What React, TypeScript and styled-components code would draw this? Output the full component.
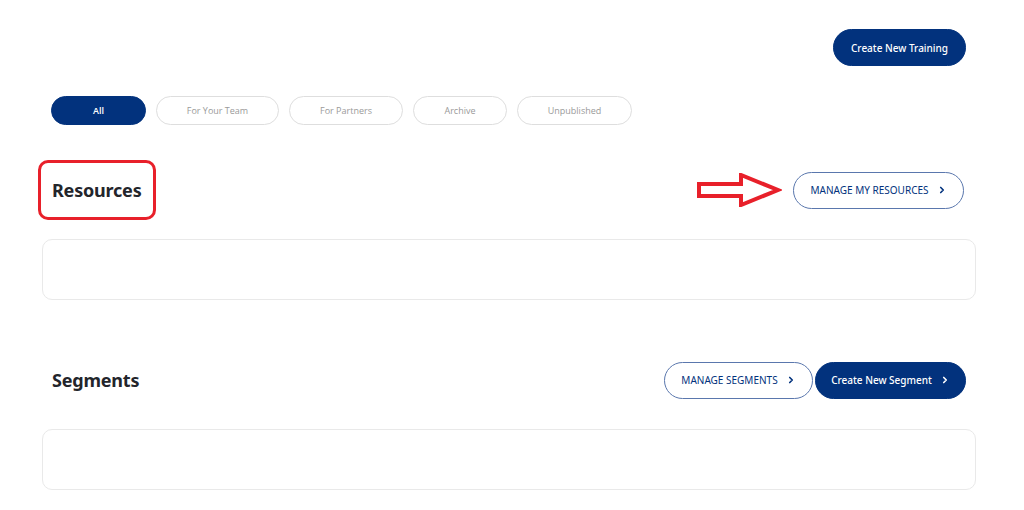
import React from 'react';
import styled, { createGlobalStyle } from 'styled-components';
import { ChevronRight } from 'lucide-react';

const NAVY = '#02327d';
const RED = '#e8202a';

const GlobalStyle = createGlobalStyle`
  html, body {
    margin: 0;
    padding: 0;
    background: #ffffff;
  }
  body {
    font-family: 'Noto Sans', 'Open Sans', sans-serif;
  }
`;

const Page = styled.div`
  width: 934px;
  margin-left: 42px;
  padding-top: 29px;
`;

const TopBar = styled.div`
  display: flex;
  justify-content: flex-end;
  padding-right: 10px;
`;

const Pill = styled.button<{ variant: 'solid' | 'outline' }>`
  display: inline-flex;
  align-items: center;
  justify-content: center;
  gap: 8px;
  height: 37px;
  box-sizing: border-box;
  border-radius: 19px;
  cursor: pointer;
  font-family: 'Noto Sans', 'Open Sans', sans-serif;
  font-size: 10px;
  white-space: nowrap;
  background: ${({ variant }) => (variant === 'solid' ? NAVY : '#ffffff')};
  color: ${({ variant }) => (variant === 'solid' ? '#ffffff' : NAVY)};
  border: 1px solid ${({ variant }) => (variant === 'solid' ? NAVY : '#5a77ad')};
  font-weight: ${({ variant }) => (variant === 'solid' ? 500 : 400)};
  text-transform: ${({ variant }) => (variant === 'outline' ? 'uppercase' : 'none')};

  svg {
    flex-shrink: 0;
  }
`;

const Tabs = styled.div`
  display: flex;
  gap: 10px;
  margin-top: 30px;
  padding-left: 9px;
`;

const Tab = styled.button<{ active?: boolean; w: number }>`
  width: ${({ w }) => w}px;
  height: 29px;
  box-sizing: border-box;
  border-radius: 15px;
  font-family: 'Open Sans', 'Noto Sans', sans-serif;
  font-size: 9px;
  font-weight: ${({ active }) => (active ? 600 : 400)};
  background: ${({ active }) => (active ? NAVY : '#ffffff')};
  color: ${({ active }) => (active ? '#ffffff' : '#9a9a9a')};
  border: 1px solid ${({ active }) => (active ? NAVY : '#dedede')};
  cursor: pointer;
`;

const Section = styled.section<{ gapTop: number }>`
  margin-top: ${({ gapTop }) => gapTop}px;
`;

const SectionHeader = styled.div`
  display: flex;
  align-items: center;
  justify-content: space-between;
  height: 60px;
  padding-right: 10px;
`;

const Heading = styled.h2<{ marked?: boolean }>`
  margin: 0;
  box-sizing: border-box;
  font-family: 'Noto Sans', 'Open Sans', sans-serif;
  font-size: 18px;
  font-weight: 700;
  color: #23252b;
  letter-spacing: -0.2px;
  height: 60px;
  display: flex;
  align-items: center;
  margin-left: ${({ marked }) => (marked ? '-4px' : '0')};
  padding: ${({ marked }) => (marked ? '0 11px 0 11px' : '0 0 0 10px')};
  border: ${({ marked }) => (marked ? `3px solid ${RED}` : 'none')};
  border-radius: 10px;
`;

const Actions = styled.div<{ shift?: number }>`
  display: flex;
  align-items: center;
  gap: 2px;
  margin-right: ${({ shift }) => shift ?? 0}px;
`;

const Card = styled.div`
  margin-top: 19px;
  height: 61px;
  box-sizing: border-box;
  border: 1px solid #e9e9e9;
  border-radius: 10px;
  background: #ffffff;
`;

const ArrowMark = () => (
  <svg width="86" height="34" viewBox="0 0 86 34" style={{ marginRight: 9 }}>
    <path
      d="M3 11 H45 V2 L82 17 L45 32 V23 H3 Z"
      fill="#ffffff"
      stroke={RED}
      strokeWidth="4"
      strokeLinejoin="miter"
    />
  </svg>
);

const tabs = [
  { label: 'All', w: 95, active: true },
  { label: 'For Your Team', w: 123 },
  { label: 'For Partners', w: 114 },
  { label: 'Archive', w: 94 },
  { label: 'Unpublished', w: 115 },
];

export default function App() {
  return (
    <>
      <GlobalStyle />
      <Page>
        <TopBar>
          <Pill variant="solid" style={{ width: 133 }}>
            Create New Training
          </Pill>
        </TopBar>

        <Tabs>
          {tabs.map((t) => (
            <Tab key={t.label} active={t.active} w={t.w}>
              {t.label}
            </Tab>
          ))}
        </Tabs>

        <Section gapTop={35}>
          <SectionHeader>
            <Heading marked>Resources</Heading>
            <Actions shift={2}>
              <ArrowMark />
              <Pill variant="outline" style={{ width: 171 }}>
                Manage My Resources
                <ChevronRight size={10} strokeWidth={4} />
              </Pill>
            </Actions>
          </SectionHeader>
          <Card />
        </Section>

        <Section gapTop={50}>
          <SectionHeader>
            <Heading>Segments</Heading>
            <Actions>
              <Pill variant="outline" style={{ width: 149 }}>
                Manage Segments
                <ChevronRight size={10} strokeWidth={4} />
              </Pill>
              <Pill variant="solid" style={{ width: 151 }}>
                Create New Segment
                <ChevronRight size={10} strokeWidth={4} />
              </Pill>
            </Actions>
          </SectionHeader>
          <Card />
        </Section>
      </Page>
    </>
  );
}
